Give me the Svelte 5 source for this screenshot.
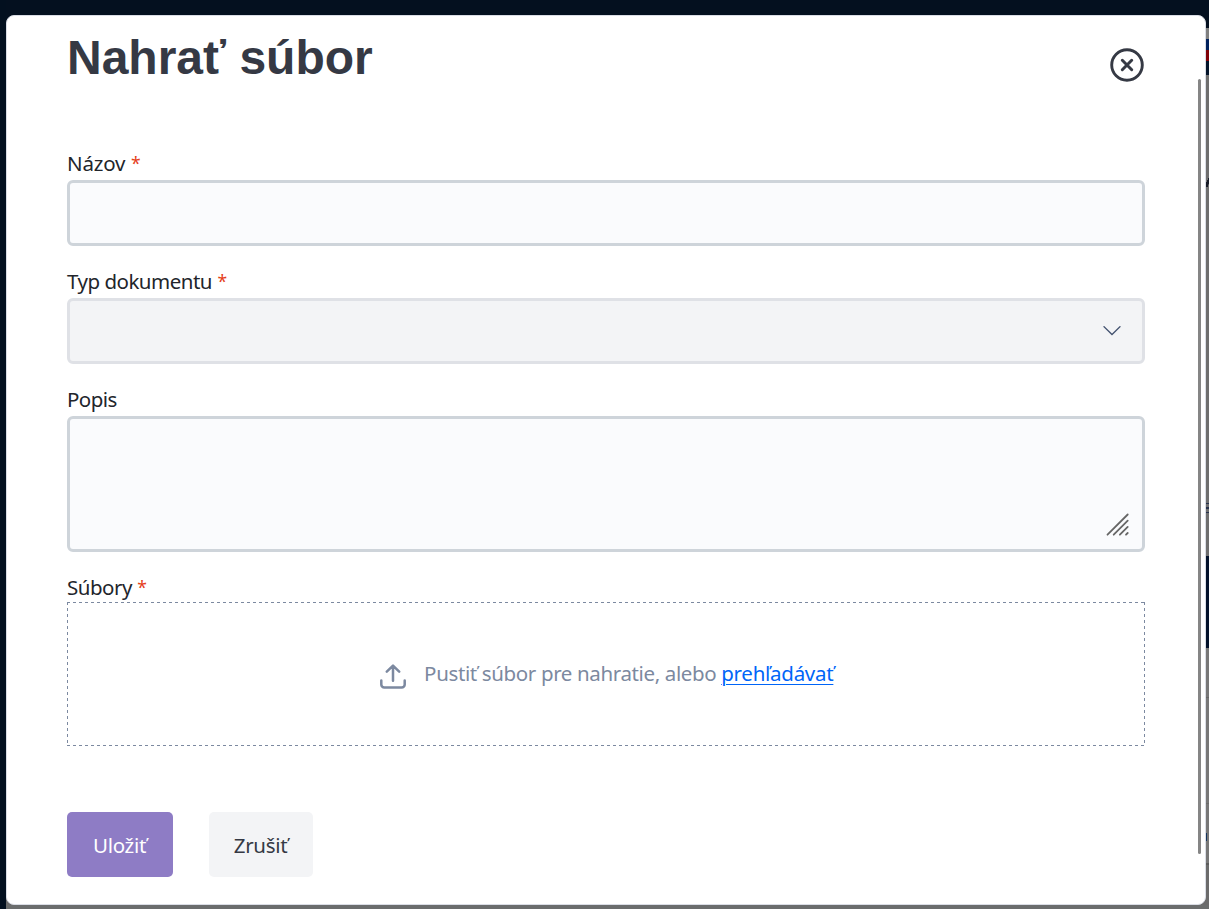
<script>
  let name = $state('');
  let description = $state('');
</script>

<div class="page">
  <div class="modal" role="dialog" aria-labelledby="title">
    <header>
      <h1 id="title">Nahrať súbor</h1>
      <button class="close" aria-label="Zavrieť">
        <svg width="34" height="34" viewBox="0 0 34 34" fill="none" stroke="#353944" stroke-linecap="round">
          <circle cx="17" cy="17" r="15.3" stroke-width="2.9" />
          <path d="M12.3 12.3l9.4 9.4M21.7 12.3l-9.4 9.4" stroke-width="3" />
        </svg>
      </button>
    </header>

    <form>
      <label for="name"><span class="n1">Názov</span><b>*</b></label>
      <input id="name" class="field" bind:value={name} />

      <label for="type"><span class="n2">Typ dokumentu</span><b>*</b></label>
      <div id="type" class="field select">
        <svg width="18" height="10" viewBox="0 0 18 10" fill="none" stroke="#43526f" stroke-width="1.3">
          <path d="M.6 .3L9 8.5L17.4 .3" />
        </svg>
      </div>

      <label for="description"><span class="n3">Popis</span></label>
      <div class="field area">
        <textarea id="description" bind:value={description}></textarea>
        <svg width="24" height="24" viewBox="0 0 24 24" fill="none" stroke="#666" stroke-width="1.8" stroke-linecap="round">
          <path d="M1.5 21.7L21.7 1.5M7.7 21.7l14-14M13.9 21.7l7.8-7.8M20 21.7l1.7-1.7" />
        </svg>
      </div>

      <label for="files"><span class="n4">Súbory</span><b>*</b></label>
      <div id="files" class="drop">
        <svg width="26" height="26" viewBox="0 0 26 26" fill="none" stroke="#7c89a0" stroke-width="2.5" stroke-linecap="round" stroke-linejoin="round">
          <path d="M1.3 16.5v4a3 3 0 0 0 3 3h17.4a3 3 0 0 0 3-3v-4M13 16.8V2M6.8 7.6L13 1.6L19.2 7.6" />
        </svg>
        <p><span>Pustiť súbor pre nahratie, alebo</span> <a href="#files">prehľadávať</a></p>
      </div>

      <footer>
        <button type="button" class="save">Uložiť</button>
        <button type="button" class="cancel">Zrušiť</button>
      </footer>
    </form>
    <div class="scrollbar"></div>
  </div>
</div>

<style>
  :global(body) { margin: 0; overflow: hidden; }
  * { box-sizing: border-box; }
  .page {
    width: 1209px;
    height: 909px;
    padding: 15px 3px 4px 6px;
    font-family: "Noto Sans", sans-serif;
    background:
      linear-gradient(115deg, transparent 45%, #171b27 46% 80%, transparent 81%) 1206px 175px / 3px 12px no-repeat,
      linear-gradient(#26324b 0 1px, transparent 1px 4px, #26324b 4px 6px, transparent 6px 9px, #26324b 9px 10px) 1206px 503px / 3px 10px no-repeat,
      linear-gradient(#15345c, #15345c) 1206px 833px / 1px 8px no-repeat,
      linear-gradient(#03101f, #03101f) 0 0 / 6px 909px no-repeat,
      linear-gradient(#04101f, #04101f) 0 0 / 1209px 28px no-repeat,
      linear-gradient(#6b6d6d, #6b6d6d) 0 905px / 1209px 4px no-repeat,
      linear-gradient(#7f7f7f 39px, #00205c 39px 50px, #800007 50px 61px, #04142a 61px 75px,
        #6e6e6e 75px 556px, #02112a 556px 648px, #777 648px 697px, #666 697px 698px,
        #777 698px 803px, #6b6b6b 803px 804px, #777 804px 863px, #5c5c5c 863px 865px, #6b6b6b 865px);
  }
  .modal {
    position: relative;
    width: 1200px;
    height: 890px;
    padding: 0 60px;
    background: #fff;
    border: 1px solid #dadde5;
    border-radius: 8px;
  }
  header {
    display: flex;
    justify-content: space-between;
    height: 132px;
    padding-top: 14px;
  }
  h1 {
    margin: 0;
    font: bold 48px/56px "Liberation Sans", sans-serif;
    color: #353944;
    white-space: nowrap;
  }
  .close {
    width: 34px;
    height: 34px;
    margin: 18px 1px 0 0;
    padding: 0;
    border: 0;
    background: none;
  }
  svg { display: block; flex: none; }
  form { display: flex; flex-direction: column; }
  label {
    display: flex;
    gap: 5.5px;
    height: 32px;
    font-size: 20.5px;
    line-height: 31px;
    color: #22252b;
    white-space: nowrap;
  }
  .n1 { letter-spacing: -.15px; }
  .n2 { letter-spacing: -.5px; }
  .n3 { letter-spacing: -.55px; }
  .n4 { letter-spacing: -.5px; }
  b { font-size: 17.5px; line-height: 30px; font-weight: 400; color: #e5401b; }
  .field {
    width: 1078px;
    height: 66px;
    margin: 0 0 20px;
    padding: 0;
    border: 3px solid #ced4da;
    border-radius: 6px;
    background: #fafbfd;
    outline: 0;
  }
  .select {
    display: flex;
    align-items: center;
    justify-content: flex-end;
    padding: 0 21px 1px 0;
    border-color: #dfe1e6;
    background: #f3f4f6;
  }
  .area {
    display: flex;
    align-items: flex-end;
    height: 136px;
    padding: 0 12px 12px 0;
  }
  textarea { flex: 1; height: 100%; border: 0; outline: 0; resize: none; background: none; }
  .drop {
    display: flex;
    justify-content: center;
    width: 1078px;
    height: 144px;
    margin-top: -2px;
    padding: 1px;
    background:
      repeating-linear-gradient(90deg, #7c89a0 0 3px, transparent 3px 6px) 0 0 / 100% 1px no-repeat,
      repeating-linear-gradient(90deg, #7c89a0 0 3px, transparent 3px 6px) 0 100% / 100% 1px no-repeat,
      repeating-linear-gradient(#7c89a0 0 3px, transparent 3px 6px) 0 0 / 1px 100% no-repeat,
      repeating-linear-gradient(#7c89a0 0 3px, transparent 3px 6px) 100% 0 / 1px 100% no-repeat;
  }
  .drop svg { margin: 61px 18.5px 0 1px; }
  .drop p {
    margin: 54px 0 0;
    font-size: 20.5px;
    line-height: 32px;
    letter-spacing: -.37px;
    color: #7c89a0;
    white-space: nowrap;
  }
  a {
    color: #0065f8;
    letter-spacing: -.27px;
    text-decoration-thickness: 1px;
    text-underline-offset: 3px;
  }
  footer { display: flex; gap: 36px; margin-top: 66px; }
  footer button {
    height: 65px;
    padding: 1px 1px 0 0;
    border: 0;
    border-radius: 5px;
    font: 20.5px "Noto Sans", sans-serif;
    letter-spacing: -.3px;
  }
  .save { width: 106px; color: #fff; background: #8e7cc5; }
  .cancel { width: 104px; color: #353944; background: #f3f4f6; }
  .scrollbar {
    position: absolute;
    top: 63px;
    right: 4px;
    width: 3px;
    height: 775px;
    border-radius: 2px;
    background: #858585;
  }
</style>
